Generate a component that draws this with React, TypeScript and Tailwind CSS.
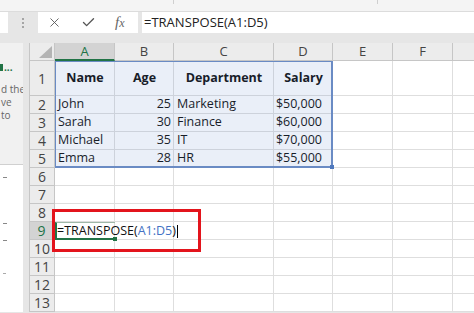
import { X, Check } from 'lucide-react'

const letters = ['A', 'B', 'C', 'D', 'E', 'F', 'G']

type Cell = { text: string; align?: 'left' | 'right' | 'center'; bold?: boolean; pad?: boolean }

const data: Cell[][] = [
  [
    { text: 'Name', align: 'center', bold: true },
    { text: 'Age', align: 'center', bold: true },
    { text: 'Department', align: 'center', bold: true },
    { text: 'Salary', align: 'center', bold: true },
  ],
  [{ text: 'John' }, { text: '25', align: 'right' }, { text: 'Marketing' }, { text: '$50,000', align: 'right', pad: true }],
  [{ text: 'Sarah' }, { text: '30', align: 'right' }, { text: 'Finance' }, { text: '$60,000', align: 'right', pad: true }],
  [{ text: 'Michael' }, { text: '35', align: 'right' }, { text: 'IT' }, { text: '$70,000', align: 'right', pad: true }],
  [{ text: 'Emma' }, { text: '28', align: 'right' }, { text: 'HR' }, { text: '$55,000', align: 'right', pad: true }],
]

function FormulaBar() {
  return (
    <div className="flex h-[21px] items-stretch">
      <div className="w-[8px] shrink-0 bg-white" />
      <div className="flex w-[30px] shrink-0 flex-col items-center justify-center gap-[2px]">
        <span className="h-[2px] w-[2px] bg-[#a5a5a5]" />
        <span className="h-[2px] w-[2px] bg-[#a5a5a5]" />
        <span className="h-[2px] w-[2px] bg-[#a5a5a5]" />
      </div>
      <div className="flex w-[100px] shrink-0 items-center bg-white text-[#555]">
        <X size={15} strokeWidth={1.4} className="ml-[9px]" />
        <Check size={15} strokeWidth={2.2} className="ml-[19px]" />
        <span className="ml-[19px] font-['Liberation_Serif',serif] text-[15px] italic text-[#666]">
          f<span className="text-[12px]">x</span>
        </span>
      </div>
      <div className="ml-[4px] flex flex-1 items-center bg-white pl-[2px] text-[13px] text-[#222]">
        =TRANSPOSE(A1:D5)
      </div>
    </div>
  )
}

function LeftPanel() {
  return (
    <div className="flex w-[23px] shrink-0 flex-col overflow-hidden bg-[#f1f1f1] text-[10px] leading-[13px] text-[#666]">
      <div className="mt-[18px] flex items-center gap-[1px] whitespace-nowrap">
        <span className="h-[7px] w-[3px] bg-[#217346]" />
        <span className="font-bold text-[#217346]">...</span>
      </div>
      <div className="mt-[9px] whitespace-nowrap pl-[1px]">d the</div>
      <div className="whitespace-nowrap pl-[1px]">ve</div>
      <div className="whitespace-nowrap pl-[1px]">to</div>
      <div className="mt-[42px] flex flex-1 flex-col border-t border-[#d0d0d0] bg-white pl-[3px]">
        <span className="mt-[12px] h-[1px] w-[4px] bg-[#888]" />
        <span className="mt-[45px] h-[1px] w-[4px] bg-[#888]" />
        <span className="mt-[16px] h-[1px] w-[4px] bg-[#888]" />
        <span className="mt-[32px] h-[1px] w-[3px] bg-[#aaa]" />
      </div>
    </div>
  )
}

function Row({ r }: { r: number }) {
  const cells = data[r - 1]
  const active = r === 9
  return (
    <>
      <div
        className={
          active
            ? 'flex items-center justify-center border-b border-r-2 border-b-[#c6c6c6] border-r-[#217346] bg-[#d3d3d3] text-[14px] text-[#217346]'
            : 'flex items-center justify-center border-b border-r border-[#c6c6c6] bg-[#ececec] text-[14px] text-[#444]'
        }
      >
        {r}
      </div>
      {letters.map((l, c) => {
        const cell = cells ? cells[c] : undefined
        const align =
          cell?.align === 'right' ? 'justify-end' : cell?.align === 'center' ? 'justify-center' : 'justify-start'
        return (
          <div
            key={l}
            className={`flex items-center whitespace-nowrap border-b border-r border-[#dedede] bg-white pl-[3px] text-[12.5px] text-[#111] ${align} ${cell?.bold ? 'font-bold' : ''} ${cell?.pad ? 'pr-[10px]' : 'pr-[2px]'}`}
          >
            {cell?.text}
          </div>
        )
      })}
    </>
  )
}

function Sheet() {
  const rows = Array.from({ length: 13 }, (_, i) => i + 1)
  return (
    <div className="relative shrink-0 border-l border-[#c6c6c6]">
      <div className="grid grid-cols-[25px_60px_59px_100px_59px_60px_60px_40px] grid-rows-[18px_35px_repeat(12,18px)]">
        <div className="relative border-b border-r border-[#c6c6c6] bg-[#ececec]">
          <div className="absolute bottom-[2px] right-[2px] h-0 w-0 border-b-[12px] border-l-[13px] border-b-[#b4b4b4] border-l-transparent" />
        </div>
        {letters.map((l, i) => (
          <div
            key={l}
            className={
              i === 0
                ? 'flex items-center justify-center border-b-2 border-r border-b-[#217346] border-r-[#c6c6c6] bg-[#d3d3d3] pt-[1px] text-[13px] text-[#217346]'
                : 'flex items-center justify-center border-b border-r border-[#c6c6c6] bg-[#ececec] text-[13px] text-[#444]'
            }
          >
            {i < 6 ? l : ''}
          </div>
        ))}

        {rows.map(r => (
          <Row key={r} r={r} />
        ))}
      </div>

      {/* referenced range A1:D5 */}
      <div className="absolute left-[25px] top-[18px] h-[107px] w-[278px] border border-b-2 border-r-2 border-[#6a8bc4] bg-[rgba(80,120,200,0.12)]">
        <div className="absolute -bottom-[3px] -right-[3px] h-[4px] w-[4px] bg-[#4f78bd]" />
      </div>

      {/* active cell A9 */}
      <div className="absolute left-[25px] top-[179px] h-[18px] w-[60px] border-b-2 border-l-2 border-t border-[#217346] border-t-[#9fb8a8]">
        <div className="absolute -bottom-[3px] -right-[2px] h-[4px] w-[4px] bg-[#217346]" />
      </div>
      <div className="absolute left-[27px] top-[179px] flex h-[18px] items-center whitespace-nowrap text-[12.5px] text-[#111]">
        =TRANSPOSE(<span className="text-[#4472c4]">A1:D5</span>)
        <span className="ml-[1px] h-[13px] w-[1px] bg-black" />
      </div>

      {/* annotation */}
      <div className="absolute left-[22px] top-[166px] h-[43px] w-[149px] border-[3px] border-[#e3141c]" />
    </div>
  )
}

export default function App() {
  return (
    <div className="h-[313px] w-[474px] overflow-hidden bg-[#e6e6e6] font-['Open_Sans',sans-serif]">
      <div className="relative h-[12px] border-b border-[#dcdcdc] bg-[#f4f4f4]">
        <div className="absolute left-[173px] top-0 h-[4px] w-px bg-[#cfcfcf]" />
        <div className="absolute left-[377px] top-0 h-[4px] w-px bg-[#cfcfcf]" />
      </div>
      <FormulaBar />
      <div className="h-[10px]" />
      <div className="flex">
        <LeftPanel />
        <div className="w-[6px] shrink-0" />
        <Sheet />
      </div>
    </div>
  )
}
